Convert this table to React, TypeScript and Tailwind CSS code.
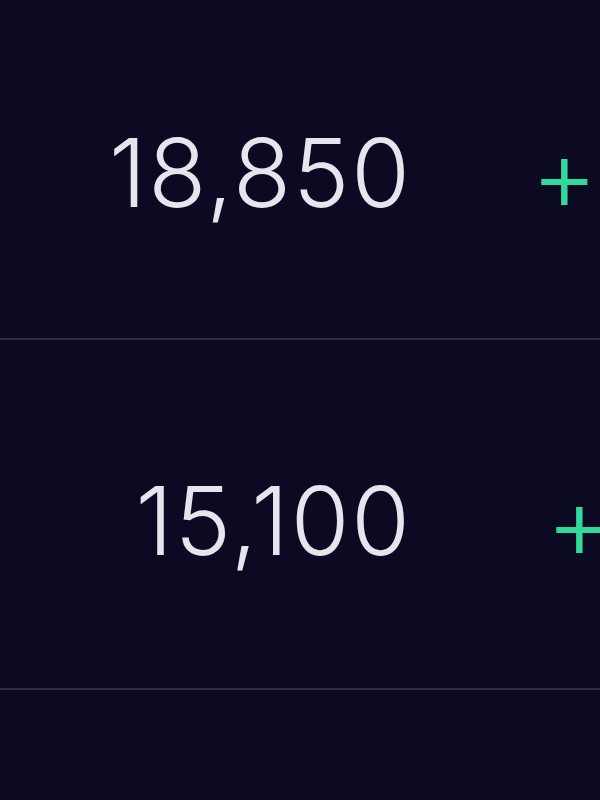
export default function App() {
  const rows = [
    { value: "18,850", ml: "ml-[119px]", pt: "pt-[6px]", h: "h-[340px]" },
    { value: "15,100", ml: "ml-[134px]", pt: "pt-[12px]", h: "h-[350px]" },
  ];
  return (
    <div
      className="w-[600px] h-[800px] overflow-hidden bg-[#0c0a23] text-[#e6e5ee]"
      style={{ fontFamily: 'Inter, "Liberation Sans", Arial, sans-serif' }}
    >
      {rows.map((r, i) => (
        <div
          key={i}
          className={`flex items-center ${r.h} ${r.pt} border-b-[2px] border-[#2c2a44] whitespace-nowrap`}
        >
          <div className="w-[412px] shrink-0 text-right text-[95px] leading-none font-[350] tracking-[2px]">{r.value}</div>
          <div className={`${r.ml} shrink-0 text-[102px] leading-none font-light text-[#32d99a] pt-[4px]`}>+</div>
        </div>
      ))}
    </div>
  );
}
